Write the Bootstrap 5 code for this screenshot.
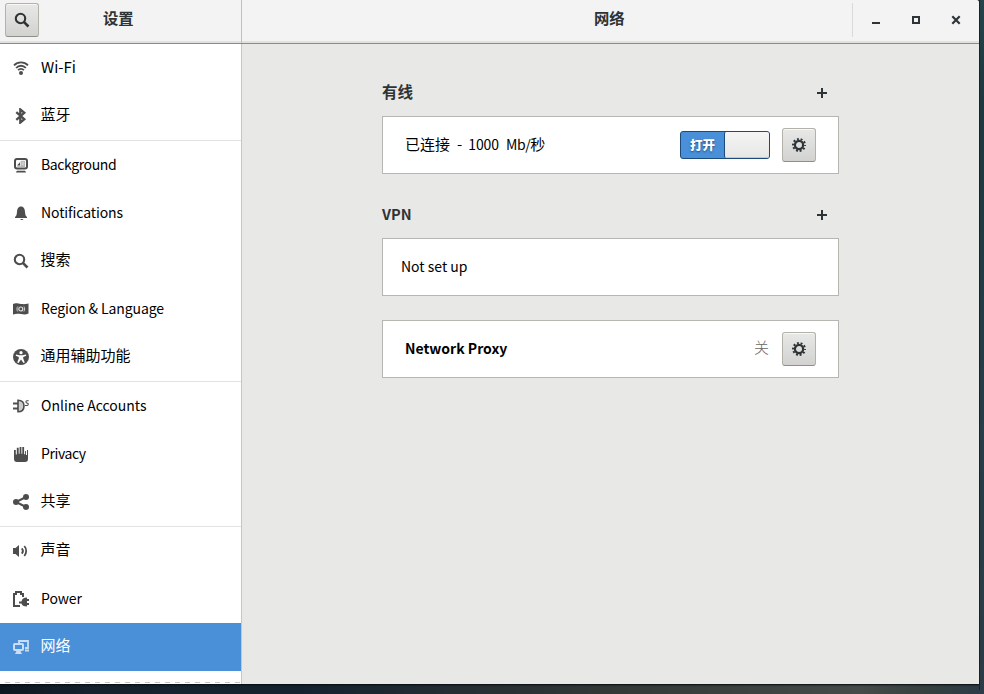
<!DOCTYPE html>
<html lang="zh-CN">
<head>
<meta charset="utf-8">
<meta name="viewport" content="width=device-width, initial-scale=1">
<title>设置</title>
<link href="https://cdn.jsdelivr.net/npm/bootstrap@5.3.0/dist/css/bootstrap.min.css" rel="stylesheet">
<style>
  body { background: linear-gradient(90deg, #0d1721 0, #15222e 90px, #14222f 300px, #262f33 480px, #333936 620px, #454b48 860px, #34403f 930px, #2c3b48 984px); overflow: hidden; height: 694px; font-family: "Noto Sans CJK SC", sans-serif; font-size: 15px; line-height: 20px; color: #000; }
  .desk-edge { width: 5px; height: 690px; background: linear-gradient(#24444a, #1e383f 100px, #263d47 400px, #2c3b45); border-left: 1px solid #14242b; }
  .win { width: 979px; height: 684px; background: #e8e8e6; border-top-right-radius: 3px; box-shadow: 0 1px 2px #060c10; }
  .topbar { height: 44px; border-top-right-radius: 3px; background: linear-gradient(#f3f3f3 0 41px, #e1e1df 41px 43px, #8b8b83 43px); color: #2e3436; }
  .topbar-left { width: 242px; height: 43px; border-right: 1px solid #c0c0bc; padding: 3px 0 0 5px; }
  .head-title { font-weight: 700; font-size: 15.3px; }
  .topbar-left .head-title { margin-left: 64px; margin-top: 4px; }
  .page-title { margin: 7px 0 0 352px; }
  .gbtn { width: 34px; height: 34px; padding: 0; border: 1px solid #b2b2ab; border-bottom-color: #8f8f88; border-radius: 3px; background: linear-gradient(#e8e8e7, #d2d2d0); box-shadow: inset 0 1px #f8f8f8; color: #2e3436; }
  .winctl { width: 127px; height: 34px; margin-top: 3px; border-left: 1px solid #d9d9d7; padding-left: 15px; gap: 24px; }
  .side { width: 242px; height: 640px; background: #fff; border-right: 1px solid #c6c6c4; }
  .side .list-group-item { height: 48px; padding: 0 0 0 13px; border: 0; color: #000; background: none; }
  .side .list-group-item svg { color: #4d4d4d; }
  .side .sep { height: 1px; background: #e2e2e2; }
  .side .list-group-item.active { background: #4a90d9; color: #fff; }
  .side .list-group-item.active svg { color: #c9def4; }
  .undershoot { height: 1px; margin-top: 11px; background: repeating-linear-gradient(90deg, transparent 0 5px, #c4c4c4 5px 10px); }
  .ic { width: 16px; height: 16px; flex: none; display: block; }
  .lbl { margin-left: 11.5px; padding-bottom: 4px; white-space: nowrap; }
  .latin { font-size: 14px; }
  .side .latin { margin-left: 12px; padding-bottom: 2px; }
  .side .tight { letter-spacing: -.4px; }
  .side .snug { letter-spacing: -.1px; }
  .side .wide { font-size: 15px; }
  .panel { width: 457px; margin-left: 140px; padding-top: 38px; }
  .sec { height: 20px; font-weight: 700; color: #2e3436; padding-right: 11px; }
  .sec svg { margin-top: 1px; }
  .sec span { padding-bottom: 2px; font-size: 15.5px; }
  .sec-vpn { margin-top: 30px; }
  .sec-vpn span { padding-bottom: 1px; font-size: 14.5px; }
  .box { height: 58px; margin-top: 14px; background: #fff; border: 1px solid #b6b6b3; padding: 0 22px; }
  .box.vpn { padding-left: 18px; }
  .box.proxy { margin-top: 24px; }
  .box > .latin, .conn { padding-bottom: 3px; }
  .conn .num { font-size: 14px; letter-spacing: -.1px; margin: 0 7px 0 6px; }
  .conn .dash { margin-left: 7px; }
  .conn .rate { font-size: 14px; letter-spacing: -.4px; }
  .net-switch { width: 90px; height: 28px; border: 1px solid #1c4a7c; border-radius: 3px; background: #4a90d9; color: #fff; font-size: 12.5px; font-weight: 900; text-shadow: 0 1px 2px #1c4a7c; margin-right: 12px; }
  .net-switch .on { width: 43px; }
  .knob { width: 45px; border-left: 1px solid #1c4a7c; background: linear-gradient(#f5f5f5, #e6e6e5); border-radius: 2px; box-shadow: inset 0 -1px #c8c8c4; }
  .off { color: #666; font-weight: 300; margin-right: 13px; padding-bottom: 4px; }
</style>
</head>
<body>
<svg class="d-none">
  <symbol id="i-search" viewBox="0 0 16 16"><circle cx="6.5" cy="6.5" r="4.7" fill="none" stroke="currentColor" stroke-width="2.1"/><path d="M9.8 9.8 14.5 14.5" stroke="currentColor" stroke-width="2.6"/></symbol>
  <symbol id="i-gear" viewBox="0 0 16 16"><circle cx="8" cy="8" r="4.1" fill="none" stroke="currentColor" stroke-width="2.2"/><circle cx="8" cy="8" r="6" fill="none" stroke="currentColor" stroke-width="2" stroke-dasharray="1.9 1.87" stroke-dashoffset=".95"/></symbol>
  <symbol id="i-plus" viewBox="0 0 12 12"><path d="M6 1v10M1 6h10" stroke="currentColor" stroke-width="2"/></symbol>
</svg>
<div class="d-flex">
<main class="win flex-shrink-0">
  <header class="topbar d-flex">
    <div class="topbar-left d-flex flex-shrink-0">
      <button class="btn gbtn d-flex align-items-center justify-content-center"><svg class="ic"><use href="#i-search"/></svg></button>
      <div class="head-title">设置</div>
    </div>
    <div class="head-title page-title">网络</div>
    <div class="winctl ms-auto d-flex align-items-center">
      <svg class="ic" viewBox="0 0 16 16"><path d="M4 11h8" stroke="#2e3436" stroke-width="2"/></svg>
      <svg class="ic" viewBox="0 0 16 16"><path d="M5 5h6v6H5z" fill="none" stroke="#2e3436" stroke-width="2"/></svg>
      <svg class="ic" viewBox="0 0 16 16"><path d="m4.3 4.3 7.4 7.4m0-7.4-7.4 7.4" stroke="#2e3436" stroke-width="2.2"/></svg>
    </div>
  </header>
  <div class="d-flex">
    <nav class="side flex-shrink-0">
      <div class="list-group list-group-flush rounded-0">
        <a class="list-group-item d-flex align-items-center"><svg class="ic" viewBox="0 0 16 16"><g fill="none" stroke="currentColor" stroke-width="1.8"><path d="M1 5.3C4.8 1.3 11.2 1.3 15 5.3"/><path d="M3.1 8C5.8 5 10.2 5 12.9 8"/><path d="M5.1 10.2c1.6-1.7 4.2-1.7 5.8 0"/></g><circle cx="8" cy="13" r="2" fill="currentColor"/></svg><span class="lbl latin wide">Wi-Fi</span></a>
        <a class="list-group-item d-flex align-items-center"><svg class="ic" viewBox="0 0 16 16"><path d="m3.3 4.2 8 7-4 3.4V1.4l4 3.4-8 7" fill="none" stroke="currentColor" stroke-width="2.3"/></svg><span class="lbl">蓝牙</span></a>
        <div class="sep"></div>
        <a class="list-group-item d-flex align-items-center"><svg class="ic" viewBox="0 0 16 16"><rect x="2" y="2" width="12" height="9.5" rx="2" fill="none" stroke="currentColor" stroke-width="2"/><path d="M4.2 9.4h7.6M8 4.2h3.6v5H8z" stroke="#aaa" fill="#ccc" stroke-width=".8"/><path d="M4 8.5h3V5.2z" fill="currentColor"/><path d="M3 15.4c0-1.2 1-1.7 2-1.7h6c1 0 2 .5 2 1.7z" fill="currentColor"/></svg><span class="lbl latin tight">Background</span></a>
        <a class="list-group-item d-flex align-items-center"><svg class="ic" viewBox="0 0 16 16"><path d="M8 1.500C5.200 1.500 4.200 4 4 6.800 3.800 10 3.300 11.300 2 12v1h12v-1c-1.300-.7-1.800-2-2-5.200C11.800 4 10.800 1.500 8 1.500zM7.300 14h3c-.2.8-.8 1-1.500 1s-1.300-.2-1.500-1z" fill="currentColor"/></svg><span class="lbl latin snug">Notifications</span></a>
        <a class="list-group-item d-flex align-items-center"><svg class="ic"><use href="#i-search"/></svg><span class="lbl">搜索</span></a>
        <a class="list-group-item d-flex align-items-center"><svg class="ic" viewBox="0 0 16 16"><path d="M0 3c3-1.5 5-.2 8 0s4 .3 7.500-.4v10c-3 1.200-5 .8-7.500.4-3-.5-5-.6-8 .5z" fill="currentColor"/><g fill="none" stroke="#ddd"><circle cx="7.8" cy="8" r="2" stroke-width="1.2"/><path d="M4.7 5.500c-1 1.500-1 3.500 0 5M10.900 5.500c1 1.500 1 3.500 0 5" stroke-width=".9"/></g></svg><span class="lbl latin snug">Region &amp; Language</span></a>
        <a class="list-group-item d-flex align-items-center"><svg class="ic" viewBox="0 0 16 16"><circle cx="8" cy="8" r="8" fill="currentColor"/><circle cx="8" cy="3.7" r="1.6" fill="#fff"/><path d="m3 5.500 3.500.8h3l3.500-.8.2 1.300-3 1.200v1.500l1.600 4-1.300.6L8 10.500l-2.500 3.600-1.300-.6 1.600-4V8l-3-1.200z" fill="#fff"/></svg><span class="lbl">通用辅助功能</span></a>
        <div class="sep"></div>
        <a class="list-group-item d-flex align-items-center"><svg class="ic" viewBox="0 0 16 16"><path d="M5 2.200c4.500 0 6 2.600 6 5.800s-1.500 5.800-6 5.800z" fill="#ccc" stroke="currentColor" stroke-width="1.6"/><path d="M0 5.500h5M0 10.500h5" stroke="currentColor" stroke-width="1.8"/><path d="M15.700 2.700h-2c-1 0-1 1.800 0 2.200l1 .4c1 .5.500 2.200-.7 2.200h-2" fill="none" stroke="currentColor" stroke-width="1.1"/></svg><span class="lbl latin">Online Accounts</span></a>
        <a class="list-group-item d-flex align-items-center"><svg class="ic" viewBox="0 0 16 16"><path d="M1 4h1.800v4.500h1V1.800h1.900v6h.9V1h1.800v6.800h.9V1h1.800v7.300h1V5h.9v4h1V4H15v9c0 2-1 3-3 3H4c-2 0-3-1-3-3z" fill="currentColor"/></svg><span class="lbl latin tight">Privacy</span></a>
        <a class="list-group-item d-flex align-items-center"><svg class="ic" viewBox="0 0 16 16"><path d="M13 3 3 8l10 5" fill="none" stroke="currentColor" stroke-width="2"/><g fill="currentColor"><circle cx="3" cy="8" r="3"/><circle cx="13" cy="3" r="3"/><circle cx="13" cy="13" r="3"/></g></svg><span class="lbl">共享</span></a>
        <div class="sep"></div>
        <a class="list-group-item d-flex align-items-center"><svg class="ic" viewBox="0 0 16 16"><path d="M0 5h2.500L6 2v12l-3.500-3H0z" fill="currentColor"/><path d="M8.800 5.300c1.300 1.500 1.300 3.900 0 5.400M11.300 3c2.500 2.800 2.500 7.200 0 10" fill="none" stroke="currentColor" stroke-width="1.8"/></svg><span class="lbl">声音</span></a>
        <a class="list-group-item d-flex align-items-center"><svg class="ic" viewBox="0 0 16 16"><path d="M7 15H1V3h2V1h5v2h2v3" fill="none" stroke="currentColor" stroke-width="2"/><path d="M6 10.500h2.500C9 8 10.500 6.500 14 6.500V8h2v2h-2v2h2v2h-2v1.500c-3.500 0-5-1-5.500-3H6z" fill="currentColor"/></svg><span class="lbl latin snug">Power</span></a>
        <a class="list-group-item active mt-0 d-flex align-items-center"><svg class="ic" viewBox="0 0 16 16"><path d="M6 4V2h9v7h-3M12 11.500h4" fill="none" stroke="currentColor" stroke-width="1.8"/><rect x="1" y="5" width="9" height="6" rx=".8" fill="none" stroke="currentColor" stroke-width="2"/><path d="M3.500 12h4l1.500 3H2z" fill="currentColor"/></svg><span class="lbl">网络</span></a>
      </div>
      <div class="undershoot"></div>
    </nav>
    <section class="panel">
      <div class="sec d-flex align-items-center justify-content-between"><span>有线</span><svg width="12" height="12"><use href="#i-plus"/></svg></div>
      <div class="box d-flex align-items-center">
        <div class="me-auto conn">已连接<span class="dash">-</span><span class="num">1000</span><span class="rate">Mb/</span>秒</div>
        <div class="net-switch d-flex"><span class="on d-flex align-items-center justify-content-center">打开</span><span class="knob"></span></div>
        <button class="btn gbtn d-flex align-items-center justify-content-center"><svg class="ic"><use href="#i-gear"/></svg></button>
      </div>
      <div class="sec sec-vpn d-flex align-items-center justify-content-between"><span>VPN</span><svg width="12" height="12"><use href="#i-plus"/></svg></div>
      <div class="box d-flex align-items-center vpn"><span class="latin">Not set up</span></div>
      <div class="box d-flex align-items-center proxy">
        <b class="latin me-auto">Network Proxy</b><span class="off">关</span>
        <button class="btn gbtn d-flex align-items-center justify-content-center"><svg class="ic"><use href="#i-gear"/></svg></button>
      </div>
    </section>
  </div>
</main>
<aside class="desk-edge"></aside>
</div>
</body>
</html>
